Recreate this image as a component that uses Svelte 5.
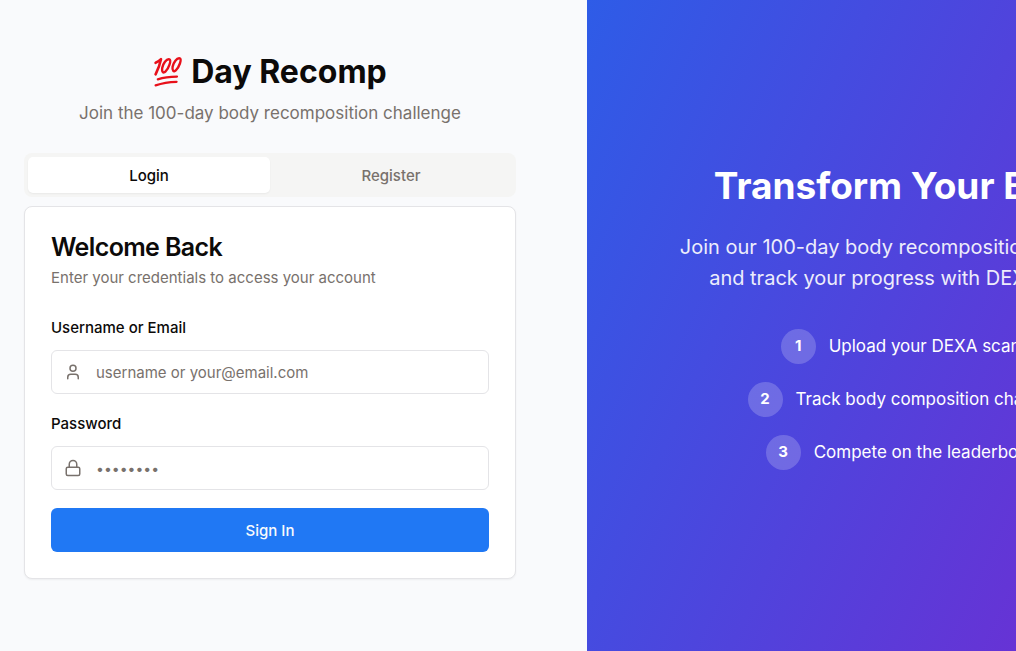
<script>
  let tab = $state('login');
  let username = $state('');
  let password = $state('');

  const steps = [
    'Upload your DEXA scans',
    'Track body composition changes',
    'Compete on the leaderboard'
  ];
</script>

<div class="page">
  <div class="split">
    <main class="auth">
      <div class="column">
        <header>
          <h1>
            <svg class="hundred" viewBox="0 0 30 32" role="img" aria-label="100">
              <g fill="none" stroke="#e8101a" stroke-linecap="round" stroke-linejoin="round">
                <path stroke-width="2.6" d="M2.6 6.8C4.8 6 6.4 4.8 8 3.2C7 8 5.2 13 2.6 18.4" />
                <path stroke-width="2.4" d="M16.4 3.4C13.4 2.6 10 7.6 9.2 12C8.6 15.8 10.2 17.6 12.4 15.6C15.8 12.4 18.6 4.2 16.4 3.4Z" />
                <path stroke-width="2.4" d="M26.8 2.4C23.8 1.6 20.4 6.4 19.6 10.8C19 14.6 20.6 16.4 22.8 14.4C26.2 11.2 29 3.2 26.8 2.4Z" />
                <path stroke-width="2.2" d="M4.8 23.4C10.6 21.4 17 20.6 24 20.6" />
                <path stroke-width="2.2" d="M2.6 29.4C9.4 27 16 26 23.6 25.8" />
              </g>
            </svg>
            <span>Day Recomp</span>
          </h1>
          <p>Join the 100-day body recomposition challenge</p>
        </header>

        <div class="tabs" role="tablist">
          <button type="button" role="tab" aria-selected={tab === 'login'} class:active={tab === 'login'} onclick={() => (tab = 'login')}>Login</button>
          <button type="button" role="tab" aria-selected={tab === 'register'} class:active={tab === 'register'} onclick={() => (tab = 'register')}>Register</button>
        </div>

        <section class="card">
          <h2>Welcome Back</h2>
          <p class="hint">Enter your credentials to access your account</p>
          <form onsubmit={(e) => e.preventDefault()}>
            <div class="field">
              <label for="username">Username or Email</label>
              <div class="box">
                <svg viewBox="0 0 24 24" aria-hidden="true">
                  <path d="M19 21v-2a4 4 0 0 0-4-4H9a4 4 0 0 0-4 4v2" />
                  <circle cx="12" cy="7" r="4" />
                </svg>
                <input id="username" type="text" placeholder="username or your@email.com" bind:value={username} />
              </div>
            </div>
            <div class="field">
              <label for="password">Password</label>
              <div class="box">
                <svg viewBox="0 0 24 24" aria-hidden="true">
                  <rect width="18" height="11" x="3" y="11" rx="2" />
                  <path d="M7 11V7a5 5 0 0 1 10 0v4" />
                </svg>
                <input id="password" type="password" placeholder="••••••••" bind:value={password} />
              </div>
            </div>
            <button class="submit" type="submit">Sign In</button>
          </form>
        </section>
      </div>
    </main>

    <aside class="promo">
      <h2>Transform Your Body</h2>
      <p>Join our 100-day body recomposition challenge<br />and track your progress with DEXA scans</p>
      <ol>
        {#each steps as step, i}
          <li><span class="number">{i + 1}</span><span>{step}</span></li>
        {/each}
      </ol>
    </aside>
  </div>
</div>

<style>
  :global(body) {
    margin: 0;
    background: #f9fafc;
  }

  .page {
    overflow: hidden;
    color: #0c0a09;
    font-family: Inter, 'Liberation Sans', sans-serif;
    font-size: 15px;
    line-height: 22px;
  }

  h1, h2, p, ol {
    margin: 0;
  }

  .split {
    display: grid;
    grid-template-columns: 13fr 14fr;
    width: 120%;
    min-height: 100vh;
  }

  .auth {
    box-sizing: border-box;
    padding: 52px 71px 24px 24px;
    background: #f9fafc;
  }

  .column {
    max-width: 492px;
    margin: 0 auto;
  }

  header {
    text-align: center;
    margin-bottom: 27px;
  }

  h1 {
    display: flex;
    justify-content: center;
    align-items: center;
    gap: 8px;
    font-size: 32px;
    line-height: 40px;
    font-weight: 700;
  }

  .hundred {
    width: 30px;
    height: 32px;
  }

  header p {
    margin-top: 8px;
    color: #78716c;
    font-size: 17px;
    line-height: 26px;
  }

  .tabs {
    display: grid;
    grid-template-columns: 1fr 1fr;
    padding: 4px;
    border-radius: 8px;
    background: #f5f5f4;
  }

  .tabs button {
    height: 36px;
    padding: 2px 0 0;
    border: 0;
    border-radius: 5px;
    background: transparent;
    color: #78716c;
    font: inherit;
    font-weight: 500;
    cursor: pointer;
  }

  .tabs .active {
    background: #fff;
    color: #0c0a09;
    box-shadow: 0 1px 2px rgb(0 0 0 / 5%);
  }

  .card {
    margin-top: 9px;
    padding: 26px;
    border: 1px solid #e4e4e7;
    border-radius: 8px;
    background: #fff;
    box-shadow: 0 1px 2px rgb(0 0 0 / 5%);
  }

  .card h2 {
    font-size: 25px;
    line-height: 28px;
    font-weight: 600;
    letter-spacing: -0.025em;
  }

  .hint {
    margin-top: 6px;
    color: #78716c;
  }

  form {
    display: grid;
    gap: 18px;
    margin-top: 27px;
  }

  .field {
    display: grid;
    gap: 10px;
  }

  label {
    font-weight: 500;
    line-height: 24px;
  }

  .box {
    display: flex;
    align-items: center;
    gap: 14px;
    height: 42px;
    padding: 0 12px;
    border: 1px solid #e4e4e7;
    border-radius: 6px;
  }

  .box svg {
    flex: none;
    width: 18px;
    height: 18px;
    fill: none;
    stroke: #78716c;
    stroke-width: 2;
    stroke-linecap: round;
    stroke-linejoin: round;
  }

  input {
    flex: 1;
    min-width: 0;
    padding: 2px 0 0;
    border: 0;
    outline: 0;
    background: transparent;
    color: #0c0a09;
    font: inherit;
  }

  input::placeholder {
    color: #78716c;
    opacity: 1;
  }

  input[type='password'] {
    font-size: 14px;
  }

  .submit {
    height: 44px;
    padding: 2px 0 0;
    border: 0;
    border-radius: 6px;
    background: #2078f4;
    color: #f8fafc;
    font: inherit;
    font-weight: 500;
    cursor: pointer;
  }

  .promo {
    display: flex;
    flex-direction: column;
    align-items: center;
    justify-content: center;
    padding: 0 0 18px 4px;
    background: linear-gradient(115deg, #2e5ce7, #6633d5 78%, #7029cf);
    color: #fff;
    text-align: center;
    white-space: nowrap;
  }

  .promo h2 {
    font-size: 37px;
    line-height: 44px;
    font-weight: 700;
  }

  .promo p {
    margin-top: 24px;
    font-size: 20px;
    line-height: 31px;
    opacity: 0.9;
  }

  ol {
    display: grid;
    gap: 18px;
    margin-top: 35px;
    padding: 0;
    list-style: none;
    font-size: 17px;
  }

  li {
    display: flex;
    align-items: center;
    justify-content: center;
    gap: 13px;
  }

  .number {
    display: grid;
    place-items: center;
    width: 35px;
    height: 35px;
    border-radius: 50%;
    background: rgb(255 255 255 / 20%);
    font-size: 15px;
    font-weight: 700;
  }
</style>
